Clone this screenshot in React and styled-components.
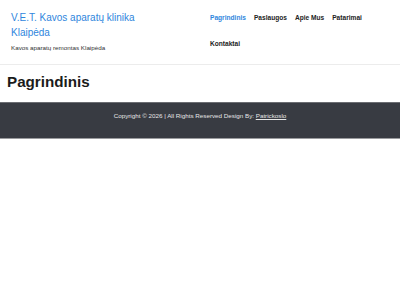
import React from "react";
import styled, { createGlobalStyle } from "styled-components";

const Global = createGlobalStyle`
  html, body { margin: 0; padding: 0; background: #fff; }
  body { font-family: "Liberation Sans", Arial, sans-serif; }
  * { box-sizing: border-box; }
`;

const Header = styled.header`
  display: flex;
  align-items: flex-start;
  height: 65px;
  border-bottom: 1px solid #ececec;
`;

const Branding = styled.div`
  padding: 10px 0 0 11px;
  width: 210px;
  flex-shrink: 0;
`;

const SiteTitle = styled.a`
  display: block;
  width: 145px;
  font-size: 10px;
  line-height: 15px;
  color: #2f86dd;
  text-decoration: none;
`;

const Tagline = styled.p`
  margin: 3px 0 0;
  font-size: 6.25px;
  line-height: 9px;
  color: #333;
`;

const Nav = styled.ul`
  list-style: none;
  margin: 5px 0 0;
  padding: 0;
  width: 182px;
  display: flex;
  flex-wrap: wrap;
  column-gap: 8px;
`;

const NavItem = styled.li`
  font-size: 6.6px;
  font-weight: 700;
  line-height: 10px;
  padding: 8px 0;
  color: ${(p) => (p.$active ? "#2f86dd" : "#222")};
`;

const Main = styled.main`
  height: 37px;
  padding: 0 7px 5px;
  display: flex;
  align-items: center;
`;

const Title = styled.h1`
  margin: 0;
  font-size: 15.2px;
  font-weight: 700;
  color: #1b1b1b;
`;

const Footer = styled.footer`
  background: #383b42;
  border-top: 1px solid #6b6d72;
  border-bottom: 1px solid #9a9b9e;
  height: 37px;
  padding-top: 8px;
  text-align: center;
  font-size: 6.25px;
  line-height: 10px;
  color: #e6e6e6;
`;

const FooterLink = styled.a`
  color: #e6e6e6;
  text-decoration: underline;
`;

const items = ["Pagrindinis", "Paslaugos", "Apie Mus", "Patarimai", "Kontaktai"];

export default function App() {
  return (
    <>
      <Global />
      <Header>
        <Branding>
          <SiteTitle href="#">V.E.T. Kavos aparatų klinika Klaipėda</SiteTitle>
          <Tagline>Kavos aparatų remontas Klaipėda</Tagline>
        </Branding>
        <Nav>
          {items.map((t, i) => (
            <NavItem key={t} $active={i === 0}>
              {t}
            </NavItem>
          ))}
        </Nav>
      </Header>
      <Main>
        <Title>Pagrindinis</Title>
      </Main>
      <Footer>
        Copyright © 2026 | All Rights Reserved Design By: <FooterLink href="#">Patrickoslo</FooterLink>
      </Footer>
    </>
  );
}
